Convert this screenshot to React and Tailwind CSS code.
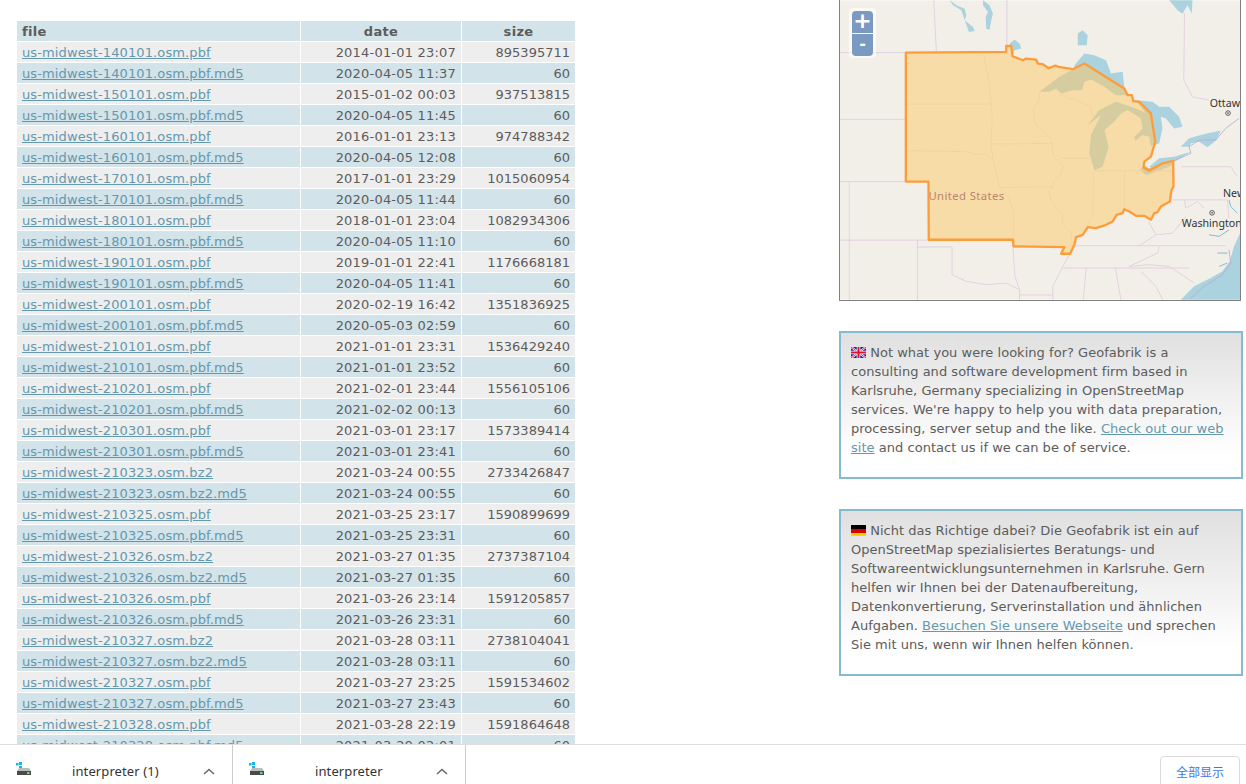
import React from "react";

const rows = [
  ["us-midwest-140101.osm.pbf", "2014-01-01 23:07", "895395711"],
  ["us-midwest-140101.osm.pbf.md5", "2020-04-05 11:37", "60"],
  ["us-midwest-150101.osm.pbf", "2015-01-02 00:03", "937513815"],
  ["us-midwest-150101.osm.pbf.md5", "2020-04-05 11:45", "60"],
  ["us-midwest-160101.osm.pbf", "2016-01-01 23:13", "974788342"],
  ["us-midwest-160101.osm.pbf.md5", "2020-04-05 12:08", "60"],
  ["us-midwest-170101.osm.pbf", "2017-01-01 23:29", "1015060954"],
  ["us-midwest-170101.osm.pbf.md5", "2020-04-05 11:44", "60"],
  ["us-midwest-180101.osm.pbf", "2018-01-01 23:04", "1082934306"],
  ["us-midwest-180101.osm.pbf.md5", "2020-04-05 11:10", "60"],
  ["us-midwest-190101.osm.pbf", "2019-01-01 22:41", "1176668181"],
  ["us-midwest-190101.osm.pbf.md5", "2020-04-05 11:41", "60"],
  ["us-midwest-200101.osm.pbf", "2020-02-19 16:42", "1351836925"],
  ["us-midwest-200101.osm.pbf.md5", "2020-05-03 02:59", "60"],
  ["us-midwest-210101.osm.pbf", "2021-01-01 23:31", "1536429240"],
  ["us-midwest-210101.osm.pbf.md5", "2021-01-01 23:52", "60"],
  ["us-midwest-210201.osm.pbf", "2021-02-01 23:44", "1556105106"],
  ["us-midwest-210201.osm.pbf.md5", "2021-02-02 00:13", "60"],
  ["us-midwest-210301.osm.pbf", "2021-03-01 23:17", "1573389414"],
  ["us-midwest-210301.osm.pbf.md5", "2021-03-01 23:41", "60"],
  ["us-midwest-210323.osm.bz2", "2021-03-24 00:55", "2733426847"],
  ["us-midwest-210323.osm.bz2.md5", "2021-03-24 00:55", "60"],
  ["us-midwest-210325.osm.pbf", "2021-03-25 23:17", "1590899699"],
  ["us-midwest-210325.osm.pbf.md5", "2021-03-25 23:31", "60"],
  ["us-midwest-210326.osm.bz2", "2021-03-27 01:35", "2737387104"],
  ["us-midwest-210326.osm.bz2.md5", "2021-03-27 01:35", "60"],
  ["us-midwest-210326.osm.pbf", "2021-03-26 23:14", "1591205857"],
  ["us-midwest-210326.osm.pbf.md5", "2021-03-26 23:31", "60"],
  ["us-midwest-210327.osm.bz2", "2021-03-28 03:11", "2738104041"],
  ["us-midwest-210327.osm.bz2.md5", "2021-03-28 03:11", "60"],
  ["us-midwest-210327.osm.pbf", "2021-03-27 23:25", "1591534602"],
  ["us-midwest-210327.osm.pbf.md5", "2021-03-27 23:43", "60"],
  ["us-midwest-210328.osm.pbf", "2021-03-28 22:19", "1591864648"],
  ["us-midwest-210328.osm.pbf.md5", "2021-03-29 02:01", "60"],
];

const REGION =
  "M228,157 L530,155 L530,137 L545,137 L549,168 L580,180 L590,175 L620,178 L625,190 L640,192 L658,204 L678,196 L688,200 L730,207 L765,190 L885,265 L895,285 L908,285 L912,303 L930,305 L965,340 L978,425 L965,470 L945,485 L943,503 L960,512 L1000,490 L1032,483 L1033,560 L1027,570 L1022,605 L995,620 L985,637 L975,640 L965,660 L945,648 L920,648 L900,635 L885,628 L880,640 L862,645 L850,665 L830,675 L800,685 L775,682 L760,705 L740,712 L735,735 L722,762 L695,762 L705,742 L552,740 L550,720 L297,720 L296,545 L228,545 Z";

const MapPicture = () => (
  <svg viewBox="30 0 1203 900" className="block w-full h-full">
    <rect x="30" y="0" width="1203" height="900" fill="#f2efe9" />
    {/* water */}
    <g fill="#aad3df">
      <path d="M360,0 L380,15 L405,25 L410,45 L405,60 L430,80 L435,92 L418,95 L405,60 L395,30 L370,15 Z" />
      <path d="M460,0 L480,15 L490,40 L485,60 L480,88 L470,85 L468,50 L475,35 L460,15 Z" />
      <path d="M540,130 L555,118 L570,130 L575,145 L555,150 L548,165 L545,140 Z" />
      <path d="M1020,0 L1090,0 L1088,40 L1075,15 L1060,40 L1045,30 Z" />
      <path d="M745,100 L760,90 L775,105 L772,135 L745,135 Z" />
      <path d="M735,195 L765,160 L795,165 L830,180 L845,220 L880,215 L885,260 L890,275 L885,265 L765,190 L735,205 Z" />
      <path d="M915,300 L970,305 L990,320 L1020,320 L1050,350 L1060,380 L1035,385 L1010,355 L995,350 L1000,385 L990,430 L978,435 L970,365 L935,320 Z" />
      <path d="M960,500 L990,475 L1035,470 L1085,455 L1035,485 L970,505 Z" />
      <path d="M1055,440 L1080,415 L1135,400 L1175,392 L1162,420 L1135,442 L1110,425 L1085,430 L1082,440 Z" />
      <path d="M1055,900 L1095,860 L1145,835 L1180,815 L1202,785 L1215,740 L1233,700 L1233,900 Z" />
    </g>
    <path d="M1200,600 L1205,620 L1225,640 M1200,690 L1170,710 L1140,705 M1195,760 L1165,760 M1195,790 L1170,800" stroke="#7fbdd3" strokeWidth="3" fill="none" />
    {/* admin borders */}
    <g fill="none" stroke="#e0cbe0" strokeWidth="2.5">
      <path d="M30,157 L228,157 M30,358 L228,358 M30,545 L296,545 M58,545 L58,900 M30,721 L297,721 M263,721 L263,900 M263,742 L367,742 L367,825 L410,845 L470,855 L530,850 L570,870 L570,900 M550,740 L556,830 L570,870 M570,886 L670,886 M670,900 L670,860 L700,800 L722,762" />
      <path d="M312,0 L320,157 M532,0 L532,137 M1066,40 L1064,240 L1090,290 L1140,300 M1057,500 L1205,500 L1225,530 M1030,600 L1195,600 M1066,600 L1070,625 L1105,605 L1125,625 M958,665 L980,705 L1030,700 L1070,650 M930,738 L980,705 M722,738 L1190,738 M700,805 L1080,805 M990,740 L985,760 L900,800 L960,795 L1020,800 L1095,850 M935,815 L980,860 L1000,900 M770,805 L762,900 M858,805 L875,900" />
      <path d="M1195,600 L1200,655" />
    </g>
    <g fill="none" stroke="#b9a8d4" strokeWidth="2.5">
      <path d="M1230,355 L1190,385 L1160,420 L1110,420 L1080,440 L1085,460 L1030,485" />
      <path d="M1085,895 L1125,860 L1180,825 L1205,790 L1200,750" />
    </g>
    <path d={REGION} fill="#ffc14d" fillOpacity="0.42" />
    {/* lakes seen through the overlay */}
    <g fill="#d5cc9f">
      <path d="M630,275 L690,230 L735,205 L765,190 L885,265 L895,285 L860,285 L825,260 L785,238 L765,245 L758,270 L730,270 L695,280 L680,265 L660,275 Z" />
      <path d="M780,460 L785,405 L815,345 L775,375 L810,330 L860,305 L920,325 L962,345 L978,425 L965,440 L960,410 L940,405 L918,422 L915,410 L940,385 L935,355 L895,330 L875,340 L855,365 L825,390 L838,440 L820,500 L795,510 Z" />
      <path d="M932,510 L945,495 L960,505 L1000,485 L1033,485 L1033,495 L980,515 L952,525 Z" />
    </g>
    {/* state lines */}
    <g fill="none" stroke="#efcfa4" strokeWidth="2">
      <path d="M230,312 L482,312 M230,452 L410,455 L435,463 L470,462 L490,480 L510,560 L540,600 L552,635 L552,740 M462,160 L480,260 L488,350 L484,430 L490,480 M485,432 L668,430 L672,470 L702,498 L695,520 L672,545 L670,560 L515,563 M670,560 L658,575 L665,605 L700,645 L698,670 L725,700 L728,730" />
      <path d="M612,325 L630,300 L630,275 M612,325 L615,370 L660,410 L668,430 M690,285 L740,300 L785,320 L790,350 M690,475 L780,475 M793,515 L790,650 L770,680 M795,512 L1032,512 M886,512 L885,628" />
    </g>
    <path d={REGION} fill="none" stroke="#ff9c3a" strokeWidth="7" strokeLinejoin="round" />
    <text x="296" y="601" fill="#bd8470" fontSize="34" letterSpacing="1.2" fontFamily="'Noto Sans', sans-serif">United States</text>
    <g fill="#333" fontSize="32" fontFamily="'Noto Sans', sans-serif">
      <text x="1142" y="320">Ottawa</text>
      <text x="1182" y="592">New York</text>
      <text x="1058" y="681">Washington</text>
    </g>
    <g fill="none" stroke="#444" strokeWidth="2.5">
      <circle cx="1197" cy="339" r="7" />
      <circle cx="1149" cy="639" r="7" />
    </g>
    <circle cx="1197" cy="339" r="2.5" fill="#444" />
    <circle cx="1149" cy="639" r="2.5" fill="#444" />
  </svg>
);

const UkFlag = () => (
  <svg viewBox="0 0 15 11" className="inline-block w-[15px] h-[11px] align-[-1px]">
    <rect width="15" height="11" fill="#1a1ab0" />
    <path d="M0,0 L15,11 M15,0 L0,11" stroke="#fff" strokeWidth="2.2" />
    <path d="M0,0 L15,11 M15,0 L0,11" stroke="#e0102a" strokeWidth="0.9" />
    <path d="M7.5,0 V11 M0,5.5 H15" stroke="#fff" strokeWidth="3.6" />
    <path d="M7.5,0 V11 M0,5.5 H15" stroke="#e0102a" strokeWidth="2" />
  </svg>
);

const DeFlag = () => (
  <svg viewBox="0 0 15 11" className="inline-block w-[15px] h-[11px] align-[-1px]">
    <rect width="15" height="4" fill="#000" />
    <rect y="4" width="15" height="4" fill="#dd0000" />
    <rect y="8" width="15" height="3" fill="#ffce00" />
  </svg>
);

const DriveIcon = () => (
  <svg viewBox="0 0 15 13" className="w-[15px] h-[13px] shrink-0">
    <rect x="0" y="1" width="2.5" height="2.5" fill="#17b5f0" />
    <rect x="3" y="0" width="3" height="3" fill="#17b5f0" />
    <rect x="3" y="4" width="3" height="3" fill="#17b5f0" />
    <path d="M3,6 H13 L15,9 H1 Z" fill="#bcbcbc" />
    <rect x="1" y="9" width="14" height="4" fill="#4a4a4a" />
    <rect x="11" y="10" width="2.5" height="2" fill="#5fe07a" />
  </svg>
);

const Chevron = () => (
  <svg viewBox="0 0 12 7" className="w-3 h-[7px]">
    <path d="M1,6 L6,1.5 L11,6" fill="none" stroke="#6b6b6b" strokeWidth="1.6" />
  </svg>
);

const DownloadItem = ({ name, width, textWidth }) => (
  <div className={`flex items-center h-[40px] pb-[2px] border-r border-[#ccc] ${width}`}>
    <div className={`pl-[16px] pt-[9px] shrink-0 ${textWidth}`}>
      <DriveIcon />
    </div>
    <span className="flex-1 pt-[15px] text-[13px] tracking-[0.1px] text-[#333]">{name}</span>
    <span className="pr-[17px] pt-[14px]">
      <Chevron />
    </span>
  </div>
);

const Box = ({ children, className }) => (
  <div
    className={`w-[404px] border-2 border-[#84bbcf] bg-gradient-to-b from-[#e0e0e0] to-white to-85% pt-[10px] pl-[10px] pr-[8px] text-[13px] leading-[19px] tracking-[0.03px] text-[#5c5c5c] ${className}`}
  >
    {children}
  </div>
);

const linkClass = "text-[#6398ad] underline";

export default function App() {
  return (
    <div className="h-[784px] flex flex-col overflow-hidden bg-white font-['DejaVu_Sans',sans-serif]">
      <div className="h-[744px] flex overflow-hidden">
        <div className="w-[839px] shrink-0 pl-[16px] pt-[20px]">
          <table className="w-[560px] table-fixed border-separate border-spacing-[1px] text-[13px] text-[#5c5c5c]">
            <colgroup>
              <col className="w-[283px]" />
              <col className="w-[160px]" />
              <col className="w-[113px]" />
            </colgroup>
            <thead>
              <tr className="h-[20px] bg-[#d3e3ea] font-bold tracking-[0.3px]">
                <th className="px-[5px] pt-[1px] text-left leading-[19px]">file</th>
                <th className="px-[5px] pt-[1px] text-center leading-[19px]">date</th>
                <th className="px-[5px] pt-[1px] text-center leading-[19px]">size</th>
              </tr>
            </thead>
            <tbody>
              {rows.map((r, i) => (
                <tr key={r[0]} className={i % 2 === 0 ? "h-[20px] bg-[#eeeeee]" : "h-[20px] bg-[#d3e3ea]"}>
                  <td className="px-[5px] pt-[1px] leading-[19px] tracking-[0.12px]">
                    <a className={linkClass}>{r[0]}</a>
                  </td>
                  <td className="px-[5px] pt-[1px] leading-[19px] text-right tracking-[0.2px]">{r[1]}</td>
                  <td className="px-[5px] pt-[1px] leading-[19px] text-right">{r[2]}</td>
                </tr>
              ))}
            </tbody>
          </table>
        </div>

        <div className="w-[404px] shrink-0">
          <div className="relative w-[402px] h-[301px] border-l border-r border-b border-[#808080]">
            <MapPicture />
            <div className="absolute left-[9px] top-[8px] w-[27px] h-[50px] p-[3px] rounded bg-white/60">
              <div className="h-[22px] mb-[1px] rounded-t bg-[#7b9ac2] text-white text-center text-[22px] leading-[20px] font-bold">+</div>
              <div className="h-[22px] rounded-b bg-[#7b9ac2] text-white text-center text-[16px] leading-[20px] font-bold">-</div>
            </div>
          </div>

          <Box className="mt-[30px] h-[148px]">
            <UkFlag /> Not what you were looking for? Geofabrik is a consulting and software development firm based in Karlsruhe, Germany specializing in OpenStreetMap services. We're happy to help you with data preparation, processing, server setup and the like.{" "}
            <a className={linkClass}>Check out our web site</a> and contact us if we can be of service.
          </Box>

          <Box className="mt-[30px] h-[167px]">
            <DeFlag /> Nicht das Richtige dabei? Die Geofabrik ist ein auf OpenStreetMap spezialisiertes Beratungs- und Softwareentwicklungsunternehmen in Karlsruhe. Gern helfen wir Ihnen bei der Datenaufbereitung, Datenkonvertierung, Serverinstallation und ähnlichen Aufgaben.{" "}
            <a className={linkClass}>Besuchen Sie unsere Webseite</a> und sprechen Sie mit uns, wenn wir Ihnen helfen können.
          </Box>
        </div>
      </div>

      <div className="h-[40px] flex items-start border-t border-[#dedede] bg-white overflow-hidden font-['Noto_Sans',sans-serif]">
        <DownloadItem name="interpreter (1)" width="w-[233px]" textWidth="w-[72px]" />
        <DownloadItem name="interpreter" width="w-[233px]" textWidth="w-[82px]" />
        <div className="ml-auto mr-[6px] mt-[11px] w-[80px] h-[40px] border border-[#dadada] rounded text-center pt-[6px] text-[12px] text-[#3b78e7] font-['Noto_Sans_CJK_SC',sans-serif]">
          全部显示
        </div>
      </div>
    </div>
  );
}
